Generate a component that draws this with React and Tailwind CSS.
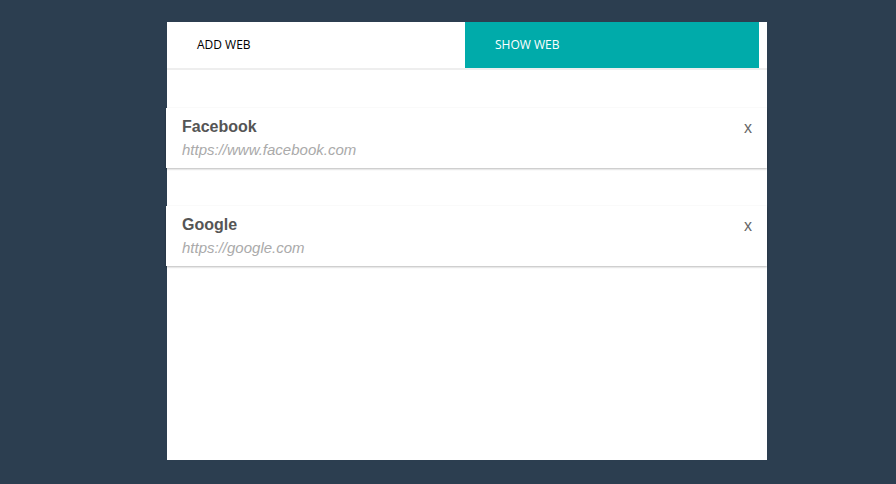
import React, { useState } from 'react';

const sites = [
  { name: 'Facebook', url: 'https://www.facebook.com' },
  { name: 'Google', url: 'https://google.com' },
];

function SiteCard({ site }) {
  return (
    <div className="relative ml-[-1px] w-[601px] h-[60px] bg-white shadow-[0_1px_2px_rgba(0,0,0,0.28)] px-[16px] pt-[9px]">
      <p className="text-[16px] leading-[20px] font-bold text-[#555]">{site.name}</p>
      <p className="mt-[4px] text-[15px] leading-[18px] italic text-[#aaa]">{site.url}</p>
      <span className="absolute right-[15px] top-[11px] text-[16px] leading-[18px] text-[#666]">x</span>
    </div>
  );
}

export default function App() {
  const [tab, setTab] = useState('show');

  return (
    <div className="w-[896px] h-[484px] bg-[#2c3e50] pt-[22px] pl-[167px]" style={{ fontFamily: 'Arial, "Liberation Sans", sans-serif' }}>
      <div className="w-[600px] h-[438px] bg-white">
        {/* Tabs */}
        <div className="flex h-[48px] border-b-2 border-[#eeeeee] font-['Open_Sans',sans-serif] text-[12px]">
          <button
            onClick={() => setTab('add')}
            className={`w-[298px] h-[46px] text-left pl-[30px] ${tab === 'add' ? 'bg-[#00abaa] text-white' : 'text-black'}`}
          >
            ADD WEB
          </button>
          <button
            onClick={() => setTab('show')}
            className={`w-[294px] h-[46px] text-left pl-[30px] ${tab === 'show' ? 'bg-[#00abaa] text-white' : 'text-black'}`}
          >
            SHOW WEB
          </button>
        </div>

        {/* List */}
        <div className="flex flex-col gap-[38px] pt-[38px]">
          {sites.map((s) => (
            <SiteCard key={s.name} site={s} />
          ))}
        </div>
      </div>
    </div>
  );
}
